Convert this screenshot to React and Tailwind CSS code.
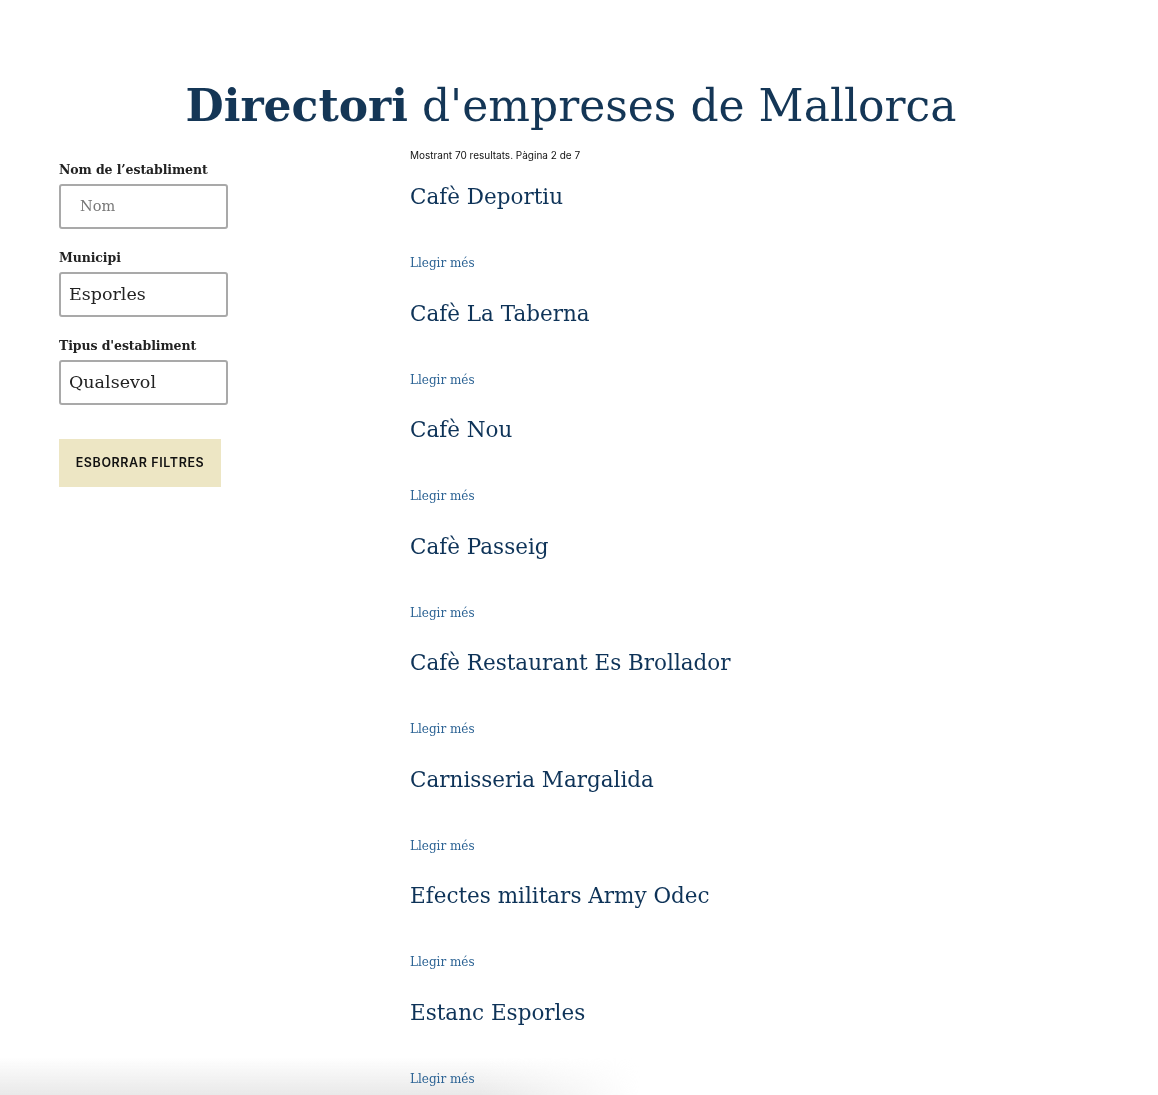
const results = [
  "Cafè Deportiu",
  "Cafè La Taberna",
  "Cafè Nou",
  "Cafè Passeig",
  "Cafè Restaurant Es Brollador",
  "Carnisseria Margalida",
  "Efectes militars Army Odec",
  "Estanc Esporles",
];

const slab = "font-['DejaVu_Serif',serif]";

const Field = ({ label, value, placeholder }) => (
  <div className="mb-[20px]">
    <p className={`${slab} text-[12.5px] font-bold text-[#222] mb-[5px] leading-[18px] tracking-[-0.1px]`}>
      {label}
    </p>
    <div
      className={`
        ${slab}
        w-[169px] h-[45px]
        border-2 border-[#a9a9a9] rounded-[3px]
        flex items-center
        ${placeholder ? "pl-[19px] text-[#777] text-[14.5px]" : "pl-[8px] text-[#222] text-[17.5px]"}
      `}
    >
      {placeholder || value}
    </div>
  </div>
);

export default function App() {
  return (
    <div className="min-h-screen bg-white">

      <div className="fixed left-0 bottom-0 w-[640px] h-[38px] pointer-events-none bg-gradient-to-t from-[#e9e9e9] to-transparent [mask-image:linear-gradient(to_right,black_75%,transparent)]" />

      <div className="relative">
        {/* Heading */}
        <h1
          className={`${slab} text-center text-[44px] leading-[56px] text-[#143656] pt-[78px] pr-[16px] font-light`}
        >
          <span className="font-bold">Directori</span> d'empreses de Mallorca
        </h1>

        <div className="flex pl-[59px] pt-[4px]">

          {/* Filters */}
          <aside className="w-[351px] shrink-0 pt-[23px]">
            <Field label="Nom de l’establiment" placeholder="Nom" />
            <Field label="Municipi" value="Esporles" />
            <Field label="Tipus d'establiment" value="Qualsevol" />

            <button
              className="
                mt-[14px]
                w-[162px] h-[48px]
                bg-[#ede6c4]
                font-['Inter',sans-serif] font-semibold
                text-[12.5px] tracking-[0.6px] text-[#111]
              "
            >
              ESBORRAR FILTRES
            </button>
          </aside>

          {/* Results */}
          <main className="flex-1">
            <p className="font-['Inter',sans-serif] text-[10px] text-[#111] leading-[12px] mt-[11px]">
              Mostrant 70 resultats. Pàgina 2 de 7
            </p>

            <div className="mt-[21px]">
              {results.map((name) => (
                <div key={name} className="h-[116.5px]">
                  <h2 className={`${slab} text-[21.5px] leading-[30px] text-[#0e3358]`}>
                    {name}
                  </h2>
                  <a className={`${slab} block mt-[43px] text-[12px] leading-[16px] text-[#2c6394]`}>
                    Llegir més
                  </a>
                </div>
              ))}
            </div>
          </main>
        </div>
      </div>
    </div>
  );
}
